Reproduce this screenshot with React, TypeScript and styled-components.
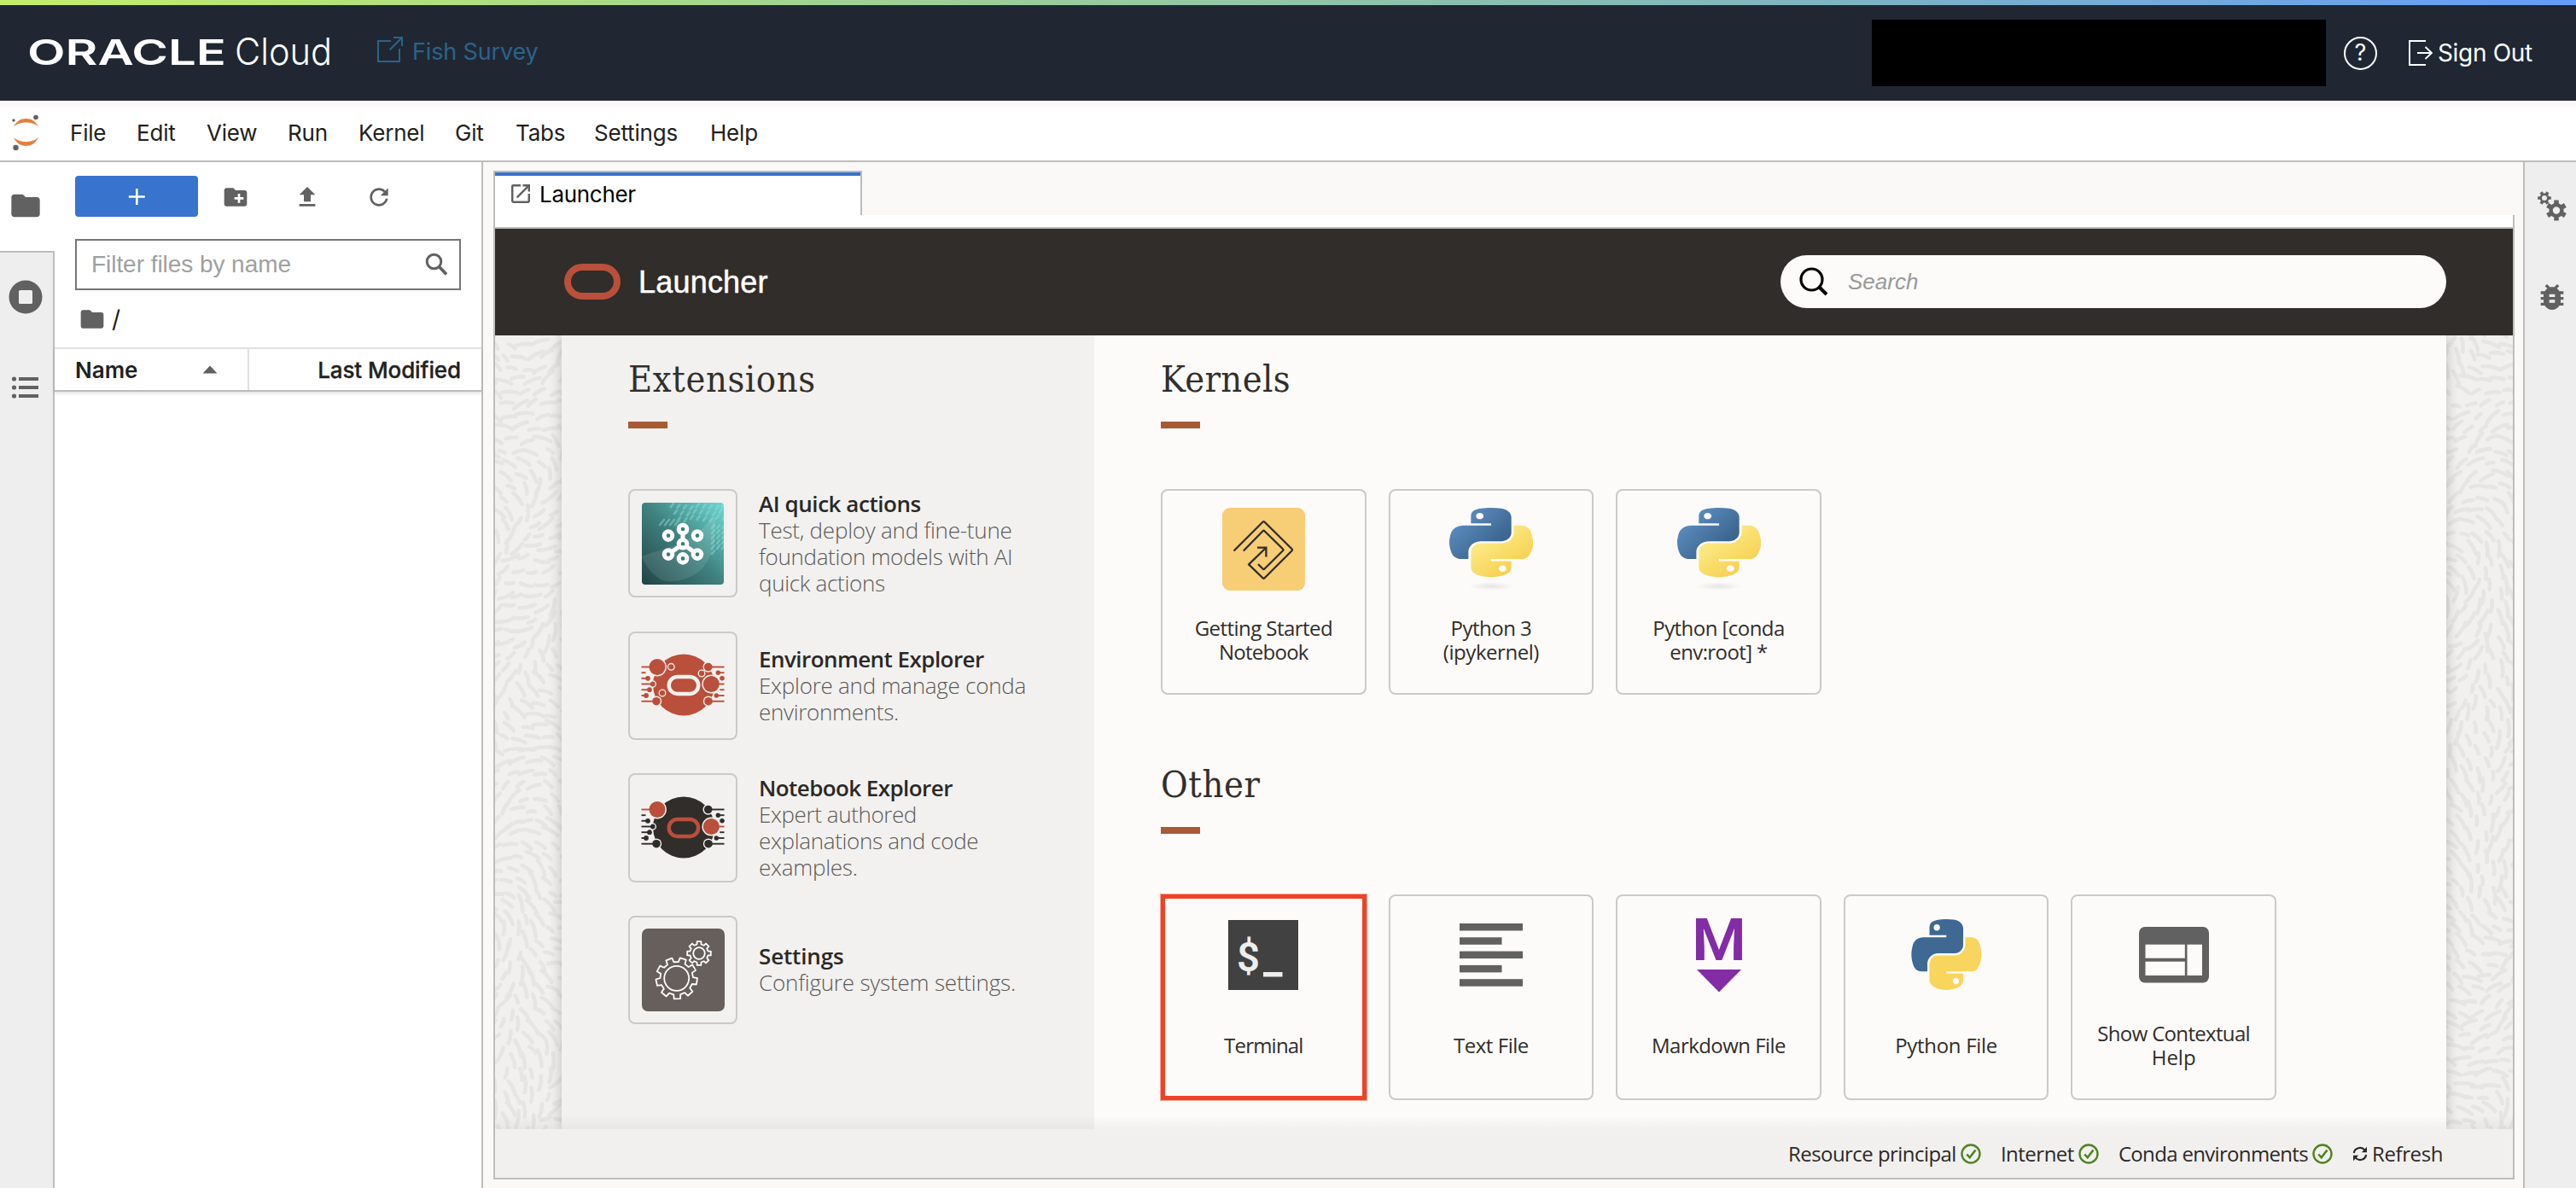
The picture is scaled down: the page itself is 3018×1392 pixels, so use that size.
import React from 'react';
import styled, { createGlobalStyle, css } from 'styled-components';

const ui = `Inter, Roboto, "Liberation Sans", sans-serif`;
const arial = `"Liberation Sans", Arial, sans-serif`;
const brand = `"Open Sans", "Noto Sans", sans-serif`;
const serif = `"DejaVu Serif Condensed", "DejaVu Serif", "Liberation Serif", serif`;

const Global = createGlobalStyle`
  * { box-sizing: border-box; }
  html, body { margin: 0; padding: 0; background: #faf9f8; }
  svg { display: block; flex: none; }
`;

const Page = styled.div`
  display: flex;
  flex-direction: column;
  width: 3018px;
  height: 1392px;
  overflow: hidden;
  font-family: ${ui};
  color: #212121;
`;

/* ---------- Top header ---------- */
const Rainbow = styled.div`
  flex: none;
  height: 6px;
  background: linear-gradient(90deg, #c2ee69 0%, #9fd293 33%, #82b8bb 67%, #649df9 100%);
`;

const Header = styled.header`
  flex: none;
  display: flex;
  align-items: center;
  height: 112px;
  padding: 0 51px 0 30px;
  background: #202733;
`;

const ProjectLink = styled.a`
  display: flex;
  align-items: center;
  gap: 11px;
  margin-left: 47px;
  padding-bottom: 3px;
  font-size: 27px;
  line-height: 36px;
  letter-spacing: -0.15px;
  color: #2b6389;
`;

const LinkIcon = styled.span`
  display: flex;
  padding-bottom: 6px;
`;

const HeaderRight = styled.div`
  display: flex;
  align-items: center;
  margin-left: auto;
`;

const Redacted = styled.div`
  width: 532px;
  height: 78px;
  background: #000;
`;

const HelpButton = styled.div`
  display: flex;
  align-items: center;
  justify-content: center;
  width: 39px;
  height: 39px;
  margin: 0 37px 0 21px;
  border: 2px solid #fff;
  border-radius: 50%;
  color: #fff;
  font-size: 27px;
  line-height: 30px;
`;

const SignOut = styled.div`
  display: flex;
  align-items: center;
  gap: 6px;
  color: #fff;
  font-size: 28px;
  line-height: 36px;
  letter-spacing: -0.3px;
`;

const HeaderGap = styled.div`
  flex: none;
  height: 8px;
  background: #fbf9f8;
  border-top: 1px solid #fff;
`;

/* ---------- Menu ---------- */
const MenuBar = styled.nav`
  flex: none;
  display: flex;
  align-items: center;
  height: 64px;
  padding: 0 0 3px 11px;
  background: #fff;
  border-bottom: 2px solid #bdbdbd;
`;

const MenuList = styled.div`
  display: flex;
  gap: 36px;
  margin-left: 32px;
`;

const MenuItem = styled.span<{ $w: number }>`
  width: ${(p) => p.$w}px;
  font-size: 26px;
  line-height: 32px;
  letter-spacing: -0.2px;
  white-space: nowrap;
`;

/* ---------- Work area ---------- */
const Work = styled.div`
  flex: 1;
  display: flex;
  min-height: 0;
`;

const Rail = styled.div`
  flex: none;
  display: flex;
  flex-direction: column;
  width: 64px;
`;

const RailTab = styled.div`
  display: flex;
  align-items: center;
  justify-content: center;
  height: 104px;
  padding: 0 4px 2px 0;
  background: #fff;
`;

const RailRest = styled.div`
  flex: 1;
  display: flex;
  flex-direction: column;
  align-items: center;
  gap: 66px;
  padding: 32px 2px 0 0;
  background: #eee;
  border-top: 2px solid #bdbdbd;
  border-right: 2px solid #bdbdbd;
`;

const RightRail = styled.div`
  flex: none;
  display: flex;
  flex-direction: column;
  align-items: center;
  gap: 68px;
  width: 62px;
  padding: 30px 0 0 4px;
  background: #eee;
  border-left: 2px solid #bdbdbd;
`;

const FilePanel = styled.aside`
  flex: none;
  display: flex;
  flex-direction: column;
  width: 502px;
  background: #fff;
  border-right: 2px solid #bdbdbd;
`;

const FileTools = styled.div`
  display: flex;
  align-items: center;
  padding: 16px 0 0 24px;
`;

const NewButton = styled.div`
  display: flex;
  align-items: center;
  justify-content: center;
  width: 144px;
  height: 48px;
  margin-right: 28px;
  background: #3873cd;
  border-radius: 4px;
`;

const ToolSlot = styled.div`
  width: 84px;
  padding-top: 1px;
`;

const FilterBox = styled.div`
  display: flex;
  align-items: center;
  justify-content: space-between;
  height: 60px;
  margin: 26px 24px 0 24px;
  padding: 0 13px 0 17px;
  border: 2px solid #757575;
  font-family: ${arial};
  font-size: 28px;
  letter-spacing: -0.05px;
  color: #a0a0a0;
`;

const Crumbs = styled.div`
  display: flex;
  align-items: center;
  gap: 7px;
  height: 67px;
  padding-left: 28px;
  font-size: 28px;
`;

const FileHead = styled.div`
  display: flex;
  height: 52px;
  border-top: 2px solid #e0e0e0;
  border-bottom: 2px solid #bdbdbd;
  box-shadow: 0 2px 4px rgba(0, 0, 0, 0.12);
  font-size: 26px;
  font-weight: 600;
`;

const NameCell = styled.div`
  display: flex;
  align-items: center;
  justify-content: space-between;
  width: 228px;
  padding: 0 35px 0 24px;
  border-right: 2px solid #e0e0e0;
`;

const ModifiedCell = styled.div`
  flex: 1;
  display: flex;
  align-items: center;
  justify-content: flex-end;
  padding-right: 24px;
  font-weight: 500;
  letter-spacing: -0.1px;
  -webkit-text-stroke: 0.3px #212121;
`;

/* ---------- Dock ---------- */
const Dock = styled.main`
  flex: 1;
  display: flex;
  flex-direction: column;
  padding: 10px 10px 10px 12px;
  background: #faf9f8;
`;

const Tab = styled.div`
  display: flex;
  align-items: center;
  gap: 11px;
  flex: none;
  width: 432px;
  height: 52px;
  padding: 0 0 0 19px;
  background: linear-gradient(#3873cd 0 4px, #fff 4px);
  border: solid #bdbdbd;
  border-width: 2px 2px 0 2px;
  font-size: 26px;
  letter-spacing: -0.3px;
  color: #000;
`;

const Launcher = styled.section`
  flex: 1;
  display: flex;
  flex-direction: column;
  border: solid #bdbdbd;
  border-width: 0 2px 2px 2px;
`;

const ToolbarStrip = styled.div`
  flex: none;
  height: 16px;
  background: #fff;
  border-bottom: 2px solid #bdbdbd;
`;

const LauncherHeader = styled.div`
  flex: none;
  display: flex;
  align-items: center;
  height: 125px;
  padding: 0 78px 1px 81px;
  background: #312d2a;
`;

const Pill = styled.div`
  width: 66px;
  height: 42px;
  border: 8px solid #ba4f3b;
  border-radius: 21px;
`;

const LauncherTitle = styled.div`
  margin-left: 21px;
  padding-top: 1px;
  font-family: ${arial};
  font-size: 36px;
  line-height: 42px;
  letter-spacing: 0.2px;
  color: #fff;
  -webkit-text-stroke: 0.5px #fff;
`;

const SearchBox = styled.div`
  display: flex;
  align-items: center;
  gap: 23px;
  width: 780px;
  height: 62px;
  margin-left: auto;
  padding-left: 22px;
  background: #fcfbfa;
  border-radius: 31px;
  font-family: ${arial};
  font-size: 26px;
  font-style: italic;
  color: #999;
`;

const Body = styled.div`
  flex: 1;
  position: relative;
  display: flex;
  min-height: 0;
  overflow: hidden;
`;

const BottomFade = styled.div`
  position: absolute;
  left: 0;
  right: 0;
  bottom: 0;
  height: 16px;
  background: linear-gradient(rgba(49, 45, 42, 0), rgba(49, 45, 42, 0.05));
`;

const TextureBox = styled.div`
  flex: none;
  width: 78px;
  height: 100%;
  background: #f1f0ee;
`;

const Sheet = styled.div`
  flex: 1;
  display: flex;
  position: relative;
  box-shadow: 0 0 14px rgba(0, 0, 0, 0.22);
`;

const ExtColumn = styled.div`
  flex: none;
  width: 624px;
  padding: 24px 0 0 78px;
  background: #f2f1ef;
`;

const MainColumn = styled.div`
  flex: 1;
  display: flex;
  flex-direction: column;
  gap: 78px;
  padding: 24px 0 0 78px;
  background: #fcfbf9;
`;

const Heading = styled.h2<{ $track: number }>`
  margin: 0;
  height: 54px;
  font-family: ${serif};
  font-size: 43px;
  font-weight: 400;
  line-height: 54px;
  letter-spacing: ${(p) => p.$track}px;
  color: #322f2c;
`;

const Accent = styled.div`
  width: 46px;
  height: 8px;
  margin: 23px 0 71px;
  background: #a65b35;
`;

const ExtList = styled.div`
  display: flex;
  flex-direction: column;
  gap: 39.2px;
`;

const ExtRow = styled.div`
  display: flex;
  align-items: center;
  gap: 25px;
  height: 127.4px;
`;

const ExtIconBox = styled.div`
  flex: none;
  display: flex;
  align-items: center;
  justify-content: center;
  width: 128px;
  height: 127.4px;
  border: 2px solid #cbcac8;
  border-radius: 8px;
`;

const ExtText = styled.div`
  font-family: ${brand};
  font-size: 26px;
  line-height: 31px;
  font-weight: 300;
  white-space: nowrap;
  color: #5c5956;
`;

const Line = styled.div<{ $track: number; $strong?: boolean }>`
  letter-spacing: ${(p) => p.$track}px;
  ${(p) => p.$strong && css`font-weight: 600; color: #2b2826;`}
`;

const Cards = styled.div`
  display: flex;
  gap: 25.9px;
`;

const Card = styled.div<{ $hot?: boolean }>`
  display: flex;
  flex-direction: column;
  align-items: center;
  width: 240.7px;
  height: 241px;
  padding-top: 20px;
  border: 2px solid #cbcac8;
  border-radius: 8px;
  ${(p) => p.$hot && css`
    padding-top: 17px;
    border: 5px solid #ee4226;
    border-radius: 0;
    outline: 1px solid #f3a897;
  `}
`;

const CardIcon = styled.div`
  display: flex;
  align-items: center;
  justify-content: center;
  height: 97px;
`;

const CardLabel = styled.div`
  display: flex;
  flex-direction: column;
  align-items: center;
  justify-content: center;
  height: 56px;
  margin-top: 30px;
  font-family: ${brand};
  font-size: 24px;
  line-height: 28px;
  white-space: nowrap;
  color: #312d2a;
`;

const Track = styled.span<{ $t: number }>`
  letter-spacing: ${(p) => p.$t}px;
`;

const StatusBar = styled.div`
  flex: none;
  display: flex;
  align-items: center;
  justify-content: flex-end;
  height: 57px;
  padding: 0 82px 0 0;
  background: #f1f0ee;
  font-family: ${brand};
  font-size: 24px;
  color: #2b2826;
`;

const StatusItem = styled.div`
  display: flex;
  align-items: center;
  gap: 5px;
  margin-left: 23px;
`;

/* ---------- Drawings ---------- */
const gearPath = (cx: number, cy: number, teeth: number, ro: number, ri: number, phase = 0) => {
  const step = (Math.PI * 2) / teeth;
  const pts: string[] = [];
  for (let i = 0; i < teeth; i++) {
    const a = phase + i * step;
    const offsets: [number, number][] = [[-0.3, ri], [-0.22, ro], [0.22, ro], [0.3, ri]];
    offsets.forEach(([o, r]) => {
      pts.push(`${(cx + r * Math.cos(a + o * step)).toFixed(2)} ${(cy + r * Math.sin(a + o * step)).toFixed(2)}`);
    });
  }
  return `M${pts.join('L')}Z`;
};

const Texture = ({ seed }: { seed: number }) => {
  let s = seed;
  const rnd = () => {
    s = (s * 16807) % 2147483647;
    return s / 2147483647;
  };
  for (let i = 0; i < 5; i++) rnd();
  const dashes: React.ReactNode[] = [];
  for (let row = 0; row < 68; row++) {
    for (let col = 0; col < 6; col++) {
      const x = col * 17 - 6 + (row % 2) * 8;
      const y = row * 14 - 4;
      const a = 1.1 + 1.1 * Math.sin(y / 95 + seed) + 0.9 * Math.cos(x / 26 + y / 60) + (rnd() - 0.5) * 0.7;
      const l = 4 + rnd() * 6.5;
      const cx = x + (rnd() - 0.5) * 6;
      const cy = y + (rnd() - 0.5) * 6;
      const dx = Math.cos(a) * l;
      const dy = Math.sin(a) * l;
      dashes.push(
        <path key={`${row}:${col}`} d={`M${cx - dx} ${cy - dy}Q${cx + dy * 0.25} ${cy - dx * 0.25} ${cx + dx} ${cy + dy}`} />,
      );
    }
  }
  return (
    <TextureBox>
      <svg width="78" height="930" fill="none" stroke="#e6e5e3" strokeWidth="4.6" strokeLinecap="round">{dashes}</svg>
    </TextureBox>
  );
};

const OracleLogo = () => (
  <svg width="365" height="60" viewBox="0 0 365 60" fill="#fff" fontFamily="Inter, sans-serif">
    <text x="2" y="44" fontSize="41" fontWeight="600" textLength="233" lengthAdjust="spacingAndGlyphs">ORACLE</text>
    <text x="245" y="44" fontSize="44" fontWeight="300" textLength="114" lengthAdjust="spacingAndGlyphs">Cloud</text>
  </svg>
);

const JupyterLogo = () => (
  <svg width="39" height="44" viewBox="0 0 39 44">
    <path d="M5 14.500C8 8.300 13 5 19.500 5S31 8.300 34 14.500C30.500 11.300 25.500 9.600 19.500 9.600S8.500 11.300 5 14.500Z" fill="#e57f3c" />
    <path d="M5 27C8 33.500 13 37 19.500 37S31 33.500 34 27C30.500 30.300 25.500 32.200 19.500 32.200S8.500 30.300 5 27Z" fill="#e57f3c" />
    <circle cx="31" cy="3.500" r="2.800" fill="#616161" />
    <circle cx="5" cy="7" r="1.700" fill="#616161" />
    <circle cx="7.500" cy="39" r="3.200" fill="#616161" />
  </svg>
);

const FolderIcon = ({ size }: { size: number }) => (
  <svg width={size} height={size} viewBox="0 0 24 24" fill="#616161">
    <path d="M10 4H4c-1.100 0-2 .9-2 2v12c0 1.100.9 2 2 2h16c1.100 0 2-.9 2-2V8c0-1.100-.9-2-2-2h-8l-2-2z" />
  </svg>
);

const pyBlue = 'M54.919 0C50.335.022 45.958.413 42.106 1.095 30.760 3.099 28.700 7.295 28.700 15.032V25.251H55.513V28.657H18.638C10.845 28.657 4.022 33.341 1.888 42.251-.574 52.464-.683 58.837 1.888 69.501 3.793 77.439 8.345 83.095 16.138 83.095H25.356V70.845C25.356 61.995 33.013 54.188 42.106 54.188H68.888C76.342 54.188 82.294 48.050 82.294 40.563V15.032C82.294 7.766 76.164 2.307 68.888 1.095 64.282.328 59.502-.020 54.919 0ZM40.419 8.220C43.188 8.220 45.450 10.518 45.450 13.345 45.450 16.161 43.188 18.438 40.419 18.438 37.639 18.438 35.388 16.161 35.388 13.345 35.388 10.518 37.639 8.220 40.419 8.220Z';
const pyYellow = 'M85.638 28.657V40.563C85.638 49.794 77.812 57.563 68.888 57.563H42.106C34.770 57.563 28.700 63.842 28.700 71.188V96.720C28.700 103.986 35.019 108.260 42.106 110.345 50.594 112.840 58.732 113.291 68.888 110.345 75.638 108.390 82.294 104.457 82.294 96.720V86.501H55.513V83.095H95.700C103.493 83.095 106.396 77.659 109.106 69.501 111.905 61.102 111.786 53.026 109.106 42.251 107.180 34.493 103.502 28.657 95.700 28.657ZM70.575 93.313C73.355 93.313 75.606 95.590 75.606 98.407 75.606 101.233 73.355 103.532 70.575 103.532 67.806 103.532 65.544 101.233 65.544 98.407 65.544 95.590 67.806 93.313 70.575 93.313Z';

const PythonKernelIcon = () => (
  <svg width="98" height="97" viewBox="0 0 98 97">
    <defs>
      <linearGradient id="pyb" x1="0" y1="0" x2="0.75" y2="0.7">
        <stop offset="0" stopColor="#6699cf" />
        <stop offset="1" stopColor="#3d6690" />
      </linearGradient>
      <linearGradient id="pyy" x1="0.25" y1="0.3" x2="0.65" y2="0.8">
        <stop offset="0" stopColor="#fbe883" />
        <stop offset="1" stopColor="#f7d355" />
      </linearGradient>
      <radialGradient id="pys">
        <stop offset="0" stopColor="#000" stopOpacity="0.09" />
        <stop offset="1" stopColor="#000" stopOpacity="0" />
      </radialGradient>
    </defs>
    <ellipse cx="49" cy="92" rx="27" ry="5" fill="url(#pys)" />
    <g transform="scale(0.883 0.723)">
      <path d={pyBlue} fill="url(#pyb)" />
      <path d={pyYellow} fill="url(#pyy)" />
    </g>
  </svg>
);

const PythonFileIcon = () => (
  <svg width="83" height="83" viewBox="0 0 111.500 112.500">
    <path d={pyBlue} fill="#3f6893" />
    <path d={pyYellow} fill="#f8d55c" />
  </svg>
);

const GettingStartedIcon = () => (
  <svg width="97" height="97" viewBox="0 0 97 97">
    <rect width="97" height="97" rx="9" fill="#f7cd76" />
    <g fill="none" stroke="#312d2a" strokeWidth="2.300" strokeLinejoin="round">
      <path d="M13.500 50.500L47.300 16.700Q48.500 15.500 49.700 16.700L81.600 48.300Q82.500 49.200 81.600 50.200L49.500 82.200Q48.500 83.200 47.500 82.200L31 66.300L51 47" />
      <path d="M41 46.700H51.400V57.500" strokeLinejoin="miter" />
      <path d="M24.800 50.500L47.500 27.300Q48.500 26.300 49.500 27.300L71 48.300Q72 49.200 71 50.200L49.500 71.500Q48.500 72.500 47.500 71.500L42 66" />
    </g>
  </svg>
);

const TerminalIcon = () => (
  <svg width="82" height="82" viewBox="0 0 82 82">
    <rect width="82" height="82" fill="#414141" />
    <text x="10" y="60" fontFamily="Roboto, sans-serif" fontSize="48" fontWeight="600" textLength="27" lengthAdjust="spacingAndGlyphs" fill="#ededed">$</text>
    <rect x="41" y="61" width="22.500" height="5.500" fill="#ededed" />
  </svg>
);

const TextFileIcon = () => (
  <svg width="74" height="74" viewBox="0 0 74 74" fill="#616161">
    {[74, 49.5, 74, 49.5, 74].map((w, i) => (
      <rect key={i} y={i * 16.3} width={w} height="8.500" />
    ))}
  </svg>
);

const MarkdownIcon = () => (
  <svg width="72" height="120" viewBox="-3 -16 72 120" fill="#832ca5">
    <text x="1" y="50" fontFamily="Roboto, sans-serif" fontSize="69" fontWeight="600" textLength="64" lengthAdjust="spacingAndGlyphs">M</text>
    <path d="M7 61H59L33 87.500Z" />
  </svg>
);

const InspectorIcon = () => (
  <svg width="82" height="66" viewBox="0 0 82 66">
    <rect width="82" height="65.500" rx="7" fill="#616161" />
    <rect x="7.500" y="20.700" width="46.300" height="16" fill="#fcfbf9" />
    <rect x="7.500" y="40.700" width="46.300" height="16.300" fill="#fcfbf9" />
    <rect x="56.500" y="20.700" width="17.500" height="36.300" fill="#fcfbf9" />
  </svg>
);

const aiNodes: [number, number][] = [[48, 31], [31, 38.6], [65, 38.6], [48, 48.3], [31, 60.6], [65, 60.6], [48, 65.4]];

const AiIcon = () => (
  <svg width="96" height="96" viewBox="0 0 96 96">
    <defs>
      <linearGradient id="aiBg" x1="0" y1="1" x2="1" y2="0">
        <stop offset="0" stopColor="#214245" />
        <stop offset="0.500" stopColor="#3f817f" />
        <stop offset="1" stopColor="#70d8d4" />
      </linearGradient>
      <clipPath id="aiClip"><rect width="96" height="96" rx="4" /></clipPath>
    </defs>
    <g clipPath="url(#aiClip)">
      <rect width="96" height="96" fill="url(#aiBg)" />
      <path d="M0 63C18 55 50 50 66 35C76 26 80 18 86 16C88 40 84 62 70 78C52 94 30 94 22 90C12 84 4 74 0 63Z" fill="#fff" opacity="0.100" />
      <g stroke="#8fe0da" strokeWidth="2.600" strokeLinecap="round" opacity="0.450">
        {Array.from({ length: 27 }, (_, i) => {
          const row = Math.floor(i / 9);
          const x = 34 + (i % 9) * 7.5 + row * 4;
          const y = 3 + row * 7 + ((i * 5) % 4);
          return <path key={i} d={`M${x} ${y + 2}l3 -4`} />;
        })}
        {Array.from({ length: 16 }, (_, i) => {
          const x = 82 + (i % 3) * 6;
          const y = 28 + Math.floor(i / 3) * 6;
          return <path key={`r${i}`} d={`M${x} ${y + 2}l3 -4`} />;
        })}
        {[19, 25, 31, 37].map((x) => <path key={`l${x}`} d={`M${x + 2} ${26}l5 -6`} />)}
      </g>
    </g>
    <path d="M48 31V48.300L31 60.600M48 48.300L65 60.600" stroke="#fff" strokeWidth="5" fill="none" />
    {aiNodes.map(([x, y], i) => (
      <circle key={i} cx={x} cy={y} r="4.800" fill="#3c7b7a" stroke="#fff" strokeWidth="5" />
    ))}
  </svg>
);

const PlanetIcon = ({ body, accent, ring, open }: { body: string; accent: string; ring: string; open?: boolean }) => {
  const bg = '#f2f1ef';
  const rows = [42.5, 49.2, 55.8, 62.5, 69.2, 76, 82.7];
  const left = [34, 20.5, 23, 28.7, 25, 21, 33];
  const right = [93.7, 105.3, 110, 97.3, 107.3, 103.3, 94];
  const rl = [9.5, 0, 2.9, 2.9, 2.9, 2.9, 4.8];
  const rr = [4.8, 2.7, 2.7, 9.5, 0, 2.7, 4.8];
  return (
    <svg width="124" height="124" viewBox="2 2 124 124">
      <circle cx="65" cy="63.500" r="36" fill={body} />
      {rows.map((y, i) => (
        <g key={i}>
          {rl[i] > 0 && <circle cx={left[i]} cy={y} r={rl[i] + 1.4} fill={bg} />}
          {rr[i] > 0 && <circle cx={right[i]} cy={y} r={rr[i] + 1.4} fill={bg} />}
        </g>
      ))}
      {rows.map((y, i) => (
        <g key={i}>
          <path d={`M15.500 ${y}H${left[i]}`} stroke={i === 0 ? accent : body} strokeWidth="1.900" />
          <path d={`M${right[i]} ${y}H112.500`} stroke={i === 3 ? accent : body} strokeWidth="1.900" />
          <circle cx={left[i]} cy={y} r={rl[i]} fill={i === 0 ? accent : body} />
          <circle cx={right[i]} cy={y} r={rr[i]} fill={i === 3 ? accent : body} />
        </g>
      ))}
      <rect x="47.700" y="53.900" width="34.500" height="20" rx="10" fill="none" stroke={ring} strokeWidth="4.500" />
      {open && [[50.3, 42.3], [86, 50], [40, 73]].map(([x, y]) => (
        <circle key={x} cx={x} cy={y} r="3.800" fill="none" stroke={bg} strokeWidth="1.300" />
      ))}
    </svg>
  );
};

const SettingsIcon = () => (
  <svg width="97" height="97" viewBox="0 0 97 97">
    <rect width="97" height="97" rx="7" fill="#665f5b" />
    <g fill="none" stroke="#fff" strokeWidth="1.800" strokeLinejoin="round">
      <path d={gearPath(40.7, 58.3, 9, 24.3, 19.3, -1.25)} />
      <circle cx="40.700" cy="58.300" r="14.500" />
      <path d={gearPath(67, 29, 8, 14, 10.8, 0)} />
      <circle cx="67" cy="29" r="6.800" />
    </g>
  </svg>
);

const CheckIcon = () => (
  <svg width="24" height="24" viewBox="0 0 24 24" fill="none" stroke="#508223">
    <circle cx="12" cy="12" r="10.500" strokeWidth="2.400" />
    <path d="M7.300 12.500L10.700 16.300L17.500 7.500" strokeWidth="2.600" />
  </svg>
);

const RefreshArrows = () => (
  <svg width="18" height="18" viewBox="0 0 18 18">
    <path d="M1.800 8A7.200 7 0 0 1 14.500 4.600M16.200 10A7.200 7 0 0 1 3.500 13.400" fill="none" stroke="#2b2826" strokeWidth="2.200" />
    <path d="M17 0.800V7.200H10.800ZM1 17.200V10.800H7.200Z" fill="#2b2826" />
  </svg>
);

const menus: [string, number][] = [
  ['File', 42], ['Edit', 46], ['View', 59], ['Run', 47], ['Kernel', 77], ['Git', 35], ['Tabs', 56], ['Settings', 100], ['Help', 60],
];

type TextLine = [string, number];

const extensions: { icon: React.ReactNode; title: TextLine; lines: TextLine[] }[] = [
  {
    icon: <AiIcon />,
    title: ['AI quick actions', -0.45],
    lines: [['Test, deploy and fine-tune', -0.24], ['foundation models with AI', -0.32], ['quick actions', -0.3]],
  },
  {
    icon: <PlanetIcon body="#ba4f3b" accent="#ba4f3b" ring="#f2f1ef" open />,
    title: ['Environment Explorer', -0.55],
    lines: [['Explore and manage conda', -0.25], ['environments.', -0.3]],
  },
  {
    icon: <PlanetIcon body="#312d2a" accent="#ba4f3b" ring="#ba4f3b" />,
    title: ['Notebook Explorer', -0.58],
    lines: [['Expert authored', -0.4], ['explanations and code', -0.33], ['examples.', -0.25]],
  },
  {
    icon: <SettingsIcon />,
    title: ['Settings', -0.15],
    lines: [['Configure system settings.', -0.2]],
  },
];

const kernels: { icon: React.ReactNode; label: TextLine[] }[] = [
  { icon: <GettingStartedIcon />, label: [['Getting Started', -0.55], ['Notebook', -0.75]] },
  { icon: <PythonKernelIcon />, label: [['Python 3', -0.5], ['(ipykernel)', -0.45]] },
  { icon: <PythonKernelIcon />, label: [['Python [conda', -0.55], ['env:root] *', -0.6]] },
];

const others: { icon: React.ReactNode; label: TextLine[]; hot?: boolean }[] = [
  { icon: <TerminalIcon />, label: [['Terminal', -0.8]], hot: true },
  { icon: <TextFileIcon />, label: [['Text File', -0.45]] },
  { icon: <MarkdownIcon />, label: [['Markdown File', -0.55]] },
  { icon: <PythonFileIcon />, label: [['Python File', -0.3]] },
  { icon: <InspectorIcon />, label: [['Show Contextual', -0.67], ['Help', 0]] },
];

const statuses: TextLine[] = [['Resource principal', -0.55], ['Internet', -0.5], ['Conda environments', -0.67]];

const Section = ({ title, track, items }: { title: string; track: number; items: { icon: React.ReactNode; label: TextLine[]; hot?: boolean }[] }) => (
  <section>
    <Heading $track={track}>{title}</Heading>
    <Accent />
    <Cards>
      {items.map((item) => (
        <Card key={item.label[0][0]} $hot={item.hot}>
          <CardIcon>{item.icon}</CardIcon>
          <CardLabel>
            {item.label.map(([t, k]) => <Track key={t} $t={k}>{t}</Track>)}
          </CardLabel>
        </Card>
      ))}
    </Cards>
  </section>
);

const App = () => (
  <Page>
    <Global />
    <Rainbow />
    <Header>
      <OracleLogo />
      <ProjectLink>
        <LinkIcon>
          <svg width="30" height="30" viewBox="0 0 30 30" fill="none" stroke="#2b6389" strokeWidth="2">
            <path d="M16 5H1V29H26V14M19 1H29V11M29 1L14.500 15.500" />
          </svg>
        </LinkIcon>
        Fish Survey
      </ProjectLink>
      <HeaderRight>
        <Redacted />
        <HelpButton>?</HelpButton>
        <SignOut>
          <svg width="28" height="30" viewBox="0 0 28 30" fill="none" stroke="#fff" strokeWidth="1.900">
            <path d="M20 1H1V29H20M10 15H27M19.500 8L27 15L19.500 22" />
          </svg>
          Sign Out
        </SignOut>
      </HeaderRight>
    </Header>
    <HeaderGap />
    <MenuBar>
      <JupyterLogo />
      <MenuList>
        {menus.map(([m, w]) => <MenuItem key={m} $w={w}>{m}</MenuItem>)}
      </MenuList>
    </MenuBar>
    <Work>
      <Rail>
        <RailTab><FolderIcon size={40} /></RailTab>
        <RailRest>
          <svg width="40" height="40" viewBox="0 0 40 40">
            <circle cx="20" cy="20" r="19.500" fill="#616161" />
            <rect x="12" y="12" width="16" height="16" rx="1.500" fill="#eee" />
          </svg>
          <svg width="40" height="40" viewBox="0 0 40 40" fill="#616161">
            {[10, 20, 30].map((y) => (
              <g key={y}>
                <circle cx="6.500" cy={y} r="2.600" />
                <rect x="12" y={y - 2} width="23" height="4" />
              </g>
            ))}
          </svg>
        </RailRest>
      </Rail>
      <FilePanel>
        <FileTools>
          <NewButton>
            <svg width="20" height="20" viewBox="0 0 20 20" stroke="#fff" strokeWidth="2.600"><path d="M10.300 1V20M0.800 10.500H19.800" /></svg>
          </NewButton>
          <ToolSlot>
            <svg width="32" height="32" viewBox="0 0 24 24" fill="#616161">
              <path d="M20 6h-8l-2-2H4c-1.110 0-1.990.89-1.990 2L2 18c0 1.110.89 2 2 2h16c1.110 0 2-.89 2-2V8c0-1.110-.89-2-2-2zm-1 8h-3v3h-2v-3h-3v-2h3V9h2v3h3v2z" />
            </svg>
          </ToolSlot>
          <ToolSlot>
            <svg width="32" height="32" viewBox="0 0 24 24" fill="#616161"><path d="M9 16h6v-6h4l-7-7-7 7h4zm-4 2h14v2H5z" /></svg>
          </ToolSlot>
          <ToolSlot>
            <svg width="32" height="32" viewBox="0 0 18 18" fill="#616161">
              <path d="M9 13.500c-2.490 0-4.500-2.010-4.500-4.500S6.510 4.500 9 4.500c1.240 0 2.360.52 3.170 1.330L10 8h5V3l-1.760 1.760C12.150 3.680 10.660 3 9 3 5.690 3 3.010 5.690 3.010 9S5.690 15 9 15c2.970 0 5.430-2.160 5.900-5h-1.520c-.46 2-2.240 3.500-4.380 3.500z" />
            </svg>
          </ToolSlot>
        </FileTools>
        <FilterBox>
          Filter files by name
          <svg width="27" height="28" viewBox="0 0 27 28" fill="none" stroke="#616161" strokeWidth="3">
            <circle cx="10.500" cy="10.500" r="8.300" />
            <path d="M16.500 16.500L25 25.500" strokeWidth="3.600" />
          </svg>
        </FilterBox>
        <Crumbs><FolderIcon size={32} />/</Crumbs>
        <FileHead>
          <NameCell>
            Name
            <svg width="18" height="10" viewBox="0 0 18 10" fill="#616161"><path d="M0.500 9.500L9 0.500L17.500 9.500Z" /></svg>
          </NameCell>
          <ModifiedCell>Last Modified</ModifiedCell>
        </FileHead>
      </FilePanel>
      <Dock>
        <Tab>
          <svg width="22" height="22" viewBox="3 3 18 18" fill="#616161">
            <path d="M19 19H5V5h7V3H5a2 2 0 0 0-2 2v14a2 2 0 0 0 2 2h14c1.100 0 2-.9 2-2v-7h-2v7zM14 3v2h3.590l-9.830 9.830 1.410 1.410L19 6.410V10h2V3h-7z" />
          </svg>
          Launcher
        </Tab>
        <Launcher>
          <ToolbarStrip />
          <LauncherHeader>
            <Pill />
            <LauncherTitle>Launcher</LauncherTitle>
            <SearchBox>
              <svg width="34" height="34" viewBox="0 0 34 34" fill="none" stroke="#000" strokeWidth="3.200">
                <circle cx="14.500" cy="14.500" r="12.500" />
                <path d="M23.500 23.500L32 32" strokeWidth="4" />
              </svg>
              Search
            </SearchBox>
          </LauncherHeader>
          <Body>
            <Texture seed={11} />
            <Sheet>
              <ExtColumn>
                <Heading $track={0.6}>Extensions</Heading>
                <Accent />
                <ExtList>
                  {extensions.map(({ icon, title, lines }) => (
                    <ExtRow key={title[0]}>
                      <ExtIconBox>{icon}</ExtIconBox>
                      <ExtText>
                        <Line $strong $track={title[1]}>{title[0]}</Line>
                        {lines.map(([t, k]) => <Line key={t} $track={k}>{t}</Line>)}
                      </ExtText>
                    </ExtRow>
                  ))}
                </ExtList>
              </ExtColumn>
              <MainColumn>
                <Section title="Kernels" track={0.4} items={kernels} />
                <Section title="Other" track={0.6} items={others} />
              </MainColumn>
            </Sheet>
            <Texture seed={47} />
            <BottomFade />
          </Body>
          <StatusBar>
            {statuses.map(([t, k]) => (
              <StatusItem key={t}><Track $t={k}>{t}</Track><CheckIcon /></StatusItem>
            ))}
            <StatusItem><RefreshArrows /><Track $t={-0.4}>Refresh</Track></StatusItem>
          </StatusBar>
        </Launcher>
      </Dock>
      <RightRail>
        <svg width="40" height="40" viewBox="0 0 40 40" fill="#616161" fillRule="evenodd">
          <path d={`${gearPath(11, 12, 6, 8, 5.5, 0)}M8 12a3 3 0 1 0 6 0a3 3 0 1 0-6 0Z`} />
          <path d={`${gearPath(25, 26.5, 6, 12.3, 8.7, Math.PI / 2)}M20.800 26.500a4.200 4.200 0 1 0 8.400 0a4.200 4.200 0 1 0-8.400 0Z`} />
        </svg>
        <svg width="40" height="40" viewBox="0 0 24 24" fill="#616161">
          <path d="M20 8h-2.810c-.45-.78-1.070-1.450-1.820-1.960L17 4.410 15.590 3l-2.170 2.170C12.960 5.060 12.490 5 12 5c-.49 0-.96.06-1.410.17L8.410 3 7 4.410l1.620 1.630C7.880 6.550 7.260 7.220 6.810 8H4v2h2.090c-.05.33-.09.66-.09 1v1H4v2h2v1c0 .34.04.67.09 1H4v2h2.810c1.040 1.790 2.970 3 5.190 3s4.150-1.210 5.190-3H20v-2h-2.090c.05-.33.09-.66.09-1v-1h2v-2h-2v-1c0-.34-.04-.67-.09-1H20V8zm-6 8h-4v-2h4v2zm0-4h-4v-2h4v2z" />
        </svg>
      </RightRail>
    </Work>
  </Page>
);

export default App;
